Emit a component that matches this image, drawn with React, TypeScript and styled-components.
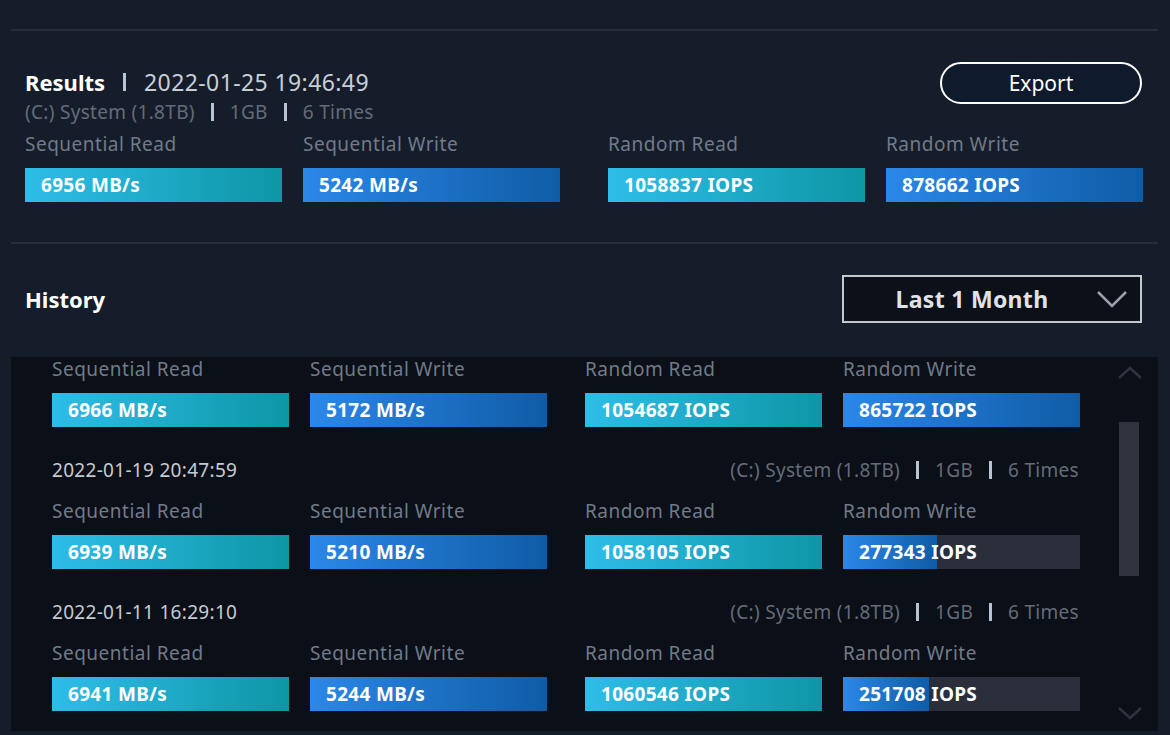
import React from "react";
import styled, { createGlobalStyle } from "styled-components";

const Global = createGlobalStyle`
  html, body { margin: 0; padding: 0; background: #161d2a; }
  body { font-family: "Noto Sans", "Open Sans", sans-serif; }
`;

const Page = styled.div`
  width: 1170px; height: 735px; overflow: hidden; background: #161d2a;
  padding: 29px 12px 0 11px; box-sizing: border-box;
`;
const Divider = styled.div`height: 2px; background: #262e3b;`;
const ResultsSec = styled.div`
  padding: 36px 16px 40px 14px; display: flex; flex-direction: column;
`;
const TopRow = styled.div`display: flex; justify-content: space-between; align-items: flex-start;`;
const TitleLine = styled.div`
  display: flex; align-items: center; gap: 12px; color: #c9ced6; font-size: 23px; line-height: 30px; letter-spacing: 0.4px;
`;
const Bold = styled.span`color: #fff; font-weight: 700; font-size: 22px; letter-spacing: 0;`;
const Sep = styled.span<{ $h: number }>`
  display: inline-block; width: 3px; height: ${p => p.$h}px; background: #b8c4d6; margin: 0 6px;
`;
const Meta = styled.div<{ $right?: boolean }>`
  display: flex; align-items: center; gap: 10px; color: #646c78; font-size: 19px; line-height: 24px; letter-spacing: 0.3px;
  ${p => p.$right ? "margin-left:auto;" : "margin-top: 3px;"}
`;
const ExportBtn = styled.button`
  width: 202px; height: 42px; border-radius: 21px; border: 2px solid #fff; background: #0f1a2c;
  color: #fff; font-family: inherit; font-size: 21px; margin-top: -5px;
`;
const Metrics = styled.div<{ $cols: string; $mt: number }>`
  display: grid; grid-template-columns: ${p => p.$cols}; margin-top: ${p => p.$mt}px;
`;
const Metric = styled.div`display: flex; flex-direction: column;`;
const Label = styled.div`color: #717b89; font-size: 19px; line-height: 24px; margin-bottom: 12px; letter-spacing: 0.5px;`;
const Bar = styled.div<{ $w: number }>`
  position: relative; width: ${p => p.$w}px; height: 34px; background: #2a2f3b; overflow: hidden;
  display: flex; align-items: center;
`;
const Fill = styled.div<{ $kind: "cyan" | "blue" }>`
  position: absolute; left: 0; top: 0; bottom: 0;
  background: ${p => p.$kind === "cyan"
    ? "linear-gradient(90deg,#2ebde9,#0e96a5)"
    : "linear-gradient(90deg,#2b87e9,#0f5ca6)"};
`;
const BarText = styled.span`
  position: relative; color: #fff; font-weight: 700; font-size: 19px; padding-left: 16px; letter-spacing: 0.3px;
`;
const HistoryHead = styled.div`
  display: flex; justify-content: space-between; align-items: center; padding: 31px 16px 34px 14px;
`;
const HTitle = styled.div`color: #fff; font-weight: 700; font-size: 22px;`;
const Select = styled.div`
  width: 256px; height: 44px; padding-right: 40px; border: 2px solid #c4c7cc; background: #0c1018; box-sizing: content-box;
  display: flex; align-items: center; justify-content: center; position: relative;
  color: #e0e2e6; font-weight: 700; font-size: 23px; letter-spacing: 0.3px;
`;
const Chevron = styled.svg`position: absolute; right: 12px; top: 12px;`;
const List = styled.div`
  background: #0b0f17; height: 374px; display: flex; overflow: hidden; position: relative;
`;
const ListInner = styled.div`flex: 1; padding: 0 0 0 41px;`;
const Record = styled.div`display: flex; flex-direction: column; margin-bottom: 31px;`;
const DateRow = styled.div`
  display: flex; align-items: center; color: #c6cad1; font-size: 19px; line-height: 24px; letter-spacing: 0.3px;
  width: 1027px; margin-bottom: 17px;
`;
const ScrollCol = styled.div`width: 39px; position: relative;`;
const Thumb = styled.div`
  position: absolute; top: 65px; left: 0; width: 20px; height: 154px; background: #2e333d;
`;
const ChevSvg = styled.svg<{ $top: number }>`position: absolute; left: -2px; top: ${p => p.$top}px;`;

type M = { label: string; value: string; kind: "cyan" | "blue"; frac?: number; };
const cols = (w: number, ms: M[]) =>
  ms.map(m => (
    <Metric key={m.label}>
      <Label>{m.label}</Label>
      <Bar $w={w}>
        <Fill $kind={m.kind} style={{ width: `${(m.frac ?? 1) * 100}%` }} />
        <BarText>{m.value}</BarText>
      </Bar>
    </Metric>
  ));

const mk = (a: string, b: string, c: string, d: string, f?: number): M[] => [
  { label: "Sequential Read", value: a, kind: "cyan" },
  { label: "Sequential Write", value: b, kind: "blue" },
  { label: "Random Read", value: c, kind: "cyan" },
  { label: "Random Write", value: d, kind: "blue", frac: f },
];

const records = [
  { date: null, m: mk("6966 MB/s", "5172 MB/s", "1054687 IOPS", "865722 IOPS") },
  { date: "2022-01-19 20:47:59", m: mk("6939 MB/s", "5210 MB/s", "1058105 IOPS", "277343 IOPS", 0.395) },
  { date: "2022-01-11 16:29:10", m: mk("6941 MB/s", "5244 MB/s", "1060546 IOPS", "251708 IOPS", 0.362) },
];

export default function App() {
  return (
    <Page>
      <Global />
      <Divider />
      <ResultsSec>
        <TopRow>
          <div>
            <TitleLine><Bold>Results</Bold><Sep $h={18} />2022-01-25 19:46:49</TitleLine>
            <Meta>(C:) System (1.8TB)<Sep $h={18} />1GB<Sep $h={18} />6 Times</Meta>
          </div>
          <ExportBtn>Export</ExportBtn>
        </TopRow>
        <Metrics $cols="278px 305px 278px 257px" $mt={8}>
          {cols(257, mk("6956 MB/s", "5242 MB/s", "1058837 IOPS", "878662 IOPS"))}
        </Metrics>
      </ResultsSec>
      <Divider />
      <HistoryHead>
        <HTitle>History</HTitle>
        <Select>
          Last 1 Month
          <Chevron width="32" height="20" viewBox="0 0 32 20"><path d="M2 3 L16 17 L30 3" stroke="#9aa1ab" strokeWidth="2.5" fill="none" /></Chevron>
        </Select>
      </HistoryHead>
      <List>
        <ListInner>
          {records.map((r, i) => (
            <Record key={i}>
              {r.date && (
                <DateRow>{r.date}<Meta $right>(C:) System (1.8TB)<Sep $h={18} />1GB<Sep $h={18} />6 Times</Meta></DateRow>
              )}
              <Metrics $cols="258px 275px 258px 237px" $mt={0}>
                {cols(237, r.m)}
              </Metrics>
            </Record>
          ))}
        </ListInner>
        <ScrollCol>
          <ChevSvg $top={8} width="26" height="16" viewBox="0 0 26 16"><path d="M2 13 L13 3 L24 13" stroke="#2e343e" strokeWidth="2.5" fill="none" /></ChevSvg>
          <Thumb />
          <ChevSvg $top={348} width="26" height="16" viewBox="0 0 26 16"><path d="M2 3 L13 13 L24 3" stroke="#2e343e" strokeWidth="2.5" fill="none" /></ChevSvg>
        </ScrollCol>
      </List>
    </Page>
  );
}
